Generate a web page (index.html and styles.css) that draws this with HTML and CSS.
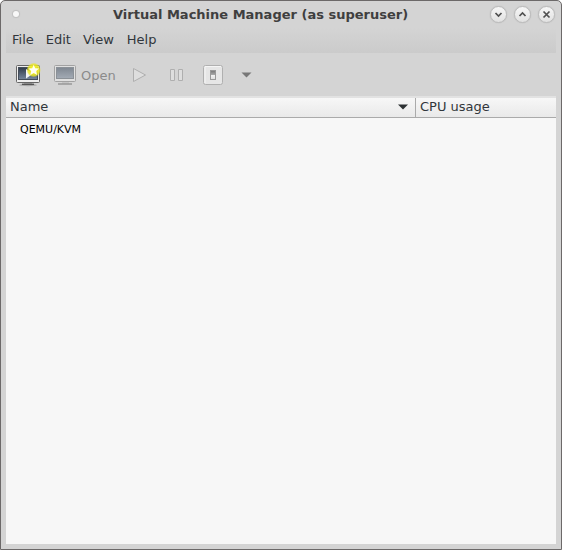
FILE: index.html
```html
<!DOCTYPE html>
<html lang="en">
<head>
<meta charset="utf-8">
<title>Virtual Machine Manager</title>
<link rel="stylesheet" href="styles.css">
</head>
<body>
<div class="window">
  <header class="titlebar">
    <span class="dot"></span>
    <h1 class="title">Virtual Machine Manager (as superuser)</h1>
    <div class="controls">
      <button class="control" aria-label="Minimize"><svg width="17" height="17" viewBox="0 0 17 17"><path d="M5.5 7l3 3 3-3"/></svg></button>
      <button class="control" aria-label="Maximize"><svg width="17" height="17" viewBox="0 0 17 17"><path d="M5.5 10l3-3 3 3"/></svg></button>
      <button class="control" aria-label="Close"><svg width="17" height="17" viewBox="0 0 17 17"><path d="M5.5 5.5l6 6M11.5 5.5l-6 6"/></svg></button>
    </div>
  </header>
  <nav class="menubar"><span>File</span><span>Edit</span><span>View</span><span class="help">Help</span></nav>
  <div class="toolbar">
    <svg class="new" width="26" height="24" viewBox="0 0 26 24">
      <defs>
        <linearGradient id="screen" x1="0" y1="0" x2="0" y2="1"><stop offset="0" stop-color="#303a49"/><stop offset="1" stop-color="#76879c"/></linearGradient>
        <radialGradient id="glow"><stop offset=".45" stop-color="#f2ee25"/><stop offset=".8" stop-color="#e9e526" stop-opacity=".8"/><stop offset="1" stop-color="#e9e526" stop-opacity="0"/></radialGradient>
      </defs>
      <ellipse cx="13" cy="22" rx="9" ry="1.2" fill="#a8a8a8"/>
      <path d="M9 19h8v2H9z" fill="#aaa"/><path d="M7 21.3h12" stroke="#555" stroke-width="1.4"/>
      <rect x="1.5" y="2.5" width="23" height="17" rx="1" fill="#eee" stroke="#666"/>
      <rect x="3.5" y="4.5" width="19" height="12" fill="url(#screen)" stroke="#454e5a"/>
      <path d="M11 6v9.5l7-4.7z" fill="#f3f5f6"/>
      <circle cx="18.7" cy="7" r="7.3" fill="url(#glow)"/>
      <path d="M18.7 1.8l1.5 3.4 3.8.3-2.8 2.6.9 3.8-3.4-1.9-3.4 1.9.9-3.8-2.8-2.6 3.8-.3z" fill="#fffff1"/>
    </svg>
    <span class="open">
      <svg width="24" height="22" viewBox="-1 0 24 22">
        <defs><linearGradient id="faded" x1="0" y1="0" x2="0" y2="1"><stop offset="0" stop-color="#7f8791"/><stop offset="1" stop-color="#a3abb5"/></linearGradient></defs>
        <path d="M8 18h7v2H8z" fill="#c4c4c4"/><path d="M4 20h14" stroke="#999" stroke-width="1.5"/>
        <rect x=".5" y="1.5" width="21" height="16" rx="1" fill="#e0e0e0" stroke="#a2a2a2"/>
        <rect x="2.5" y="3.5" width="17" height="11" fill="url(#faded)" stroke="#8b9197"/>
      </svg><span class="label">Open</span>
    </span>
    <svg class="play" width="15" height="16" viewBox="0 0 15 16"><path d="M1.5 1.5v13l12-6.5z" fill="#dedede" stroke="#afafaf"/></svg>
    <svg class="pause" width="13" height="14" viewBox="0 0 13 14"><path d="M.5 1.5h4v11h-4zM8.5 1.5h4v11h-4z" fill="#dedede" stroke="#afafaf"/></svg>
    <svg class="power" width="20" height="20" viewBox="0 0 20 20">
      <defs><linearGradient id="switch" x1="0" y1="0" x2="0" y2="1"><stop offset="0" stop-color="#777"/><stop offset=".5" stop-color="#aaa"/><stop offset=".55" stop-color="#f0f0f0"/><stop offset="1" stop-color="#ddd"/></linearGradient></defs>
      <rect x=".5" y=".5" width="19" height="19" rx="2" fill="#e6e6e6" stroke="#b0b0b0"/>
      <path d="M2 18V1.5h16" fill="none" stroke="#f5f5f5"/>
      <rect x="7.5" y="5.5" width="5" height="9" fill="url(#switch)" stroke="#999"/>
    </svg>
    <svg class="more" width="11" height="6" viewBox="0 0 11 6"><path d="M.5.5h10l-5 5z" fill="#777"/></svg>
  </div>
  <main class="list">
    <div class="columns">
      <div class="name">Name<svg width="10" height="6" viewBox="0 0 10 6"><path d="M0 .5h10l-5 5z" fill="#2c3032"/></svg></div>
      <div class="cpu">CPU usage</div>
    </div>
    <div class="row">QEMU/KVM</div>
  </main>
</div>
</body>
</html>
```
FILE: styles.css
```css
* { box-sizing: border-box; }
html { background: #fff; }
body {
  margin: 0;
  font: 13px/16px "DejaVu Sans", sans-serif;
  color: #31363b;
}
svg { display: block; flex: none; }
.window {
  width: 562px;
  height: 550px;
  display: flex;
  flex-direction: column;
  padding: 0 5px 5px;
  border: 1px solid #6c6969;
  border-radius: 5px 5px 0 0;
  background: #d4d4d4;
}
.titlebar {
  height: 27px;
  display: flex;
  align-items: center;
  flex: none;
}
.dot {
  width: 6px;
  height: 6px;
  margin: 0 1px 1px 7px;
  border-radius: 50%;
  background: #f8f8f8;
  box-shadow: 0 0 1px 1px #c0c0c0;
}
.title {
  flex: 1;
  margin: 0 0 0 93px;
  font: bold 13px/16px "DejaVu Sans", sans-serif;
  color: #3f3f3f;
  white-space: nowrap;
}
.controls {
  display: flex;
  gap: 7px;
  margin-right: 1px;
}
.control {
  width: 17px;
  height: 17px;
  padding: 0;
  border: 1px solid #bbb;
  border-radius: 50%;
  background: linear-gradient(#f7f7f7, #e1e1e1);
  box-shadow: 0 0 1px #aaa;
}
.control svg { margin: -1px; }
.control path {
  fill: none;
  stroke: #505050;
  stroke-width: 1.7;
}
.menubar {
  height: 25px;
  flex: none;
  display: flex;
  gap: 12px;
  padding: 4px 6px 0;
  background: linear-gradient(#d4d4d4, #cbcbcb);
}
.help { margin-left: 1px; }
.toolbar {
  height: 43px;
  flex: none;
  display: flex;
  align-items: center;
  padding-left: 9px;
}
.open {
  display: flex;
  align-items: center;
  gap: 4px;
  margin-left: 12px;
  color: #8b8b8b;
}
.label { padding-top: 2px; }
.play { margin-left: 16px; }
.pause { margin-left: 23px; }
.power { margin-left: 20px; }
.more { margin-left: 18px; }
.list {
  flex: 1;
  background: #f7f7f7;
}
.columns {
  height: 22px;
  display: flex;
  border-top: 2px solid #e2e2e2;
  border-bottom: 1px solid #aaa;
  background: linear-gradient(#f7f7f7, #e9e9e9);
}
.name {
  width: 410px;
  display: flex;
  align-items: center;
  justify-content: space-between;
  padding: 0 7px 2px 4px;
  border-right: 1px solid #aaa;
}
.cpu { padding: 1px 4px; }
.row {
  padding: 4px 14px;
  font-size: 11px;
  color: #000;
}
```
